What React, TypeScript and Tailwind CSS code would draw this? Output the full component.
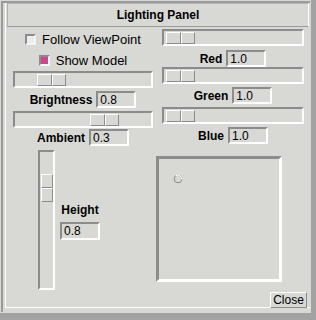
import React from "react";

const sunken =
  "border-2 border-t-[#8c8c8c] border-l-[#8c8c8c] border-b-white border-r-white";
const raised =
  "border border-t-white border-l-white border-b-[#8c8c8c] border-r-[#8c8c8c]";

function HSlider({ width, offset }: { width: string; offset: string }) {
  return (
    <div className={`${sunken} ${width} h-[17px] flex items-center`}>
      <div className={`${offset} flex w-[29px] h-[12px]`}>
        <div className={`${raised} flex-1`} />
        <div className={`${raised} flex-1`} />
      </div>
    </div>
  );
}

function Field({ label, value, mt }: { label: string; value: string; mt: string }) {
  return (
    <div className={`${mt} flex items-center gap-[4px] h-[17px]`}>
      <span className="font-bold text-[12px] leading-none">{label}</span>
      <div className={`${sunken} w-[40px] h-[17px] flex items-center pl-[2px] text-[12px] leading-none`}>
        {value}
      </div>
    </div>
  );
}

function Check({ label, checked, mt }: { label: string; checked?: boolean; mt: string }) {
  return (
    <div className={`${mt} flex items-center gap-[6px] h-[14px]`}>
      <div
        className={`w-[11px] h-[11px] border-2 border-t-[#8c8c8c] border-l-[#8c8c8c] border-b-[#f4f4f4] border-r-[#f4f4f4] ${
          checked ? "bg-[#c84a8c]" : "bg-[#ececec]"
        }`}
      />
      <span className="text-[13px] leading-none">{label}</span>
    </div>
  );
}

export default function App() {
  return (
    <div
      className="w-[316px] h-[320px] bg-[#a2a2a2] text-black"
      style={{ fontFamily: '"Liberation Sans", Arial, sans-serif' }}
    >
      <div className="w-[311px] h-[313px] bg-[#d8d8d5] p-px">
        <div className="h-full border-l-2 border-t-2 border-[#9a9a9a]">
          <div className="ml-[2px] h-[305px] border-l border-b border-white">
            {/* title */}
            <div className="ml-px w-[302px] h-[24px] border border-t-[#b4b4b4] border-l-[#b4b4b4] border-b-[#9a9a9a] border-r-white flex items-center justify-center font-bold text-[12px]">
              Lighting Panel
            </div>

            <div className="flex pl-[4px]">
              {/* left column */}
              <div className="w-[146px] flex flex-col items-center">
                <Check label="Follow ViewPoint" mt="mt-[5px]" />
                <Check label="Show Model" checked mt="mt-[7px]" />
                <div className="mt-[4px]">
                  <HSlider width="w-[140px]" offset="ml-[22px]" />
                </div>
                <Field label="Brightness" value="0.8" mt="mt-[3px]" />
                <div className="mt-[3px]">
                  <HSlider width="w-[140px]" offset="ml-[75px]" />
                </div>
                <Field label="Ambient" value="0.3" mt="mt-[1px]" />
                <div className="self-start mt-[4px] flex">
                  <div className={`${sunken} ml-[28px] w-[17px] h-[140px] flex flex-col items-center`}>
                    <div className="mt-[22px] flex flex-col w-[12px] h-[28px]">
                      <div className={`${raised} flex-1`} />
                      <div className={`${raised} flex-1`} />
                    </div>
                  </div>
                  <div className="ml-[5px] mt-[54px] flex flex-col items-center w-[40px]">
                    <span className="font-bold text-[12px] leading-none">Height</span>
                    <div className={`${sunken} mt-[6px] w-[40px] h-[18px] flex items-center pl-[2px] text-[12px] leading-none`}>
                      0.8
                    </div>
                  </div>
                </div>
              </div>

              {/* right column */}
              <div className="w-[154px] flex flex-col items-center">
                <div className="mt-[2px]">
                  <HSlider width="w-[142px]" offset="ml-[2px]" />
                </div>
                <Field label="Red" value="1.0" mt="mt-[4px]" />
                <HSlider width="w-[142px]" offset="ml-[2px]" />
                <Field label="Green" value="1.0" mt="mt-[3px]" />
                <div className="mt-[3px]">
                  <HSlider width="w-[142px]" offset="ml-[2px]" />
                </div>
                <Field label="Blue" value="1.0" mt="mt-[3px]" />
                <div className="self-start mt-[12px] w-[126px] h-[126px] border-[3px] border-t-[#8c8c8c] border-l-[#8c8c8c] border-b-white border-r-white relative">
                  <svg className="absolute left-[14px] top-[15px]" width="10" height="10" viewBox="0 0 10 10">
                    <circle cx="5" cy="5" r="3.8" fill="none" stroke="#8c8c8c" strokeWidth="1" />
                    <path d="M3 1.6 A3.8 3.8 0 0 1 8.6 5.4" fill="none" stroke="#ffffff" strokeWidth="1" />
                  </svg>
                </div>
                <div className="self-end mr-[3px] mt-[10px]">
                  <div className={`${raised} w-[37px] h-[16px] flex items-center justify-center text-[12px] leading-none`}>
                    Close
                  </div>
                </div>
              </div>
            </div>
          </div>
        </div>
      </div>
    </div>
  );
}
